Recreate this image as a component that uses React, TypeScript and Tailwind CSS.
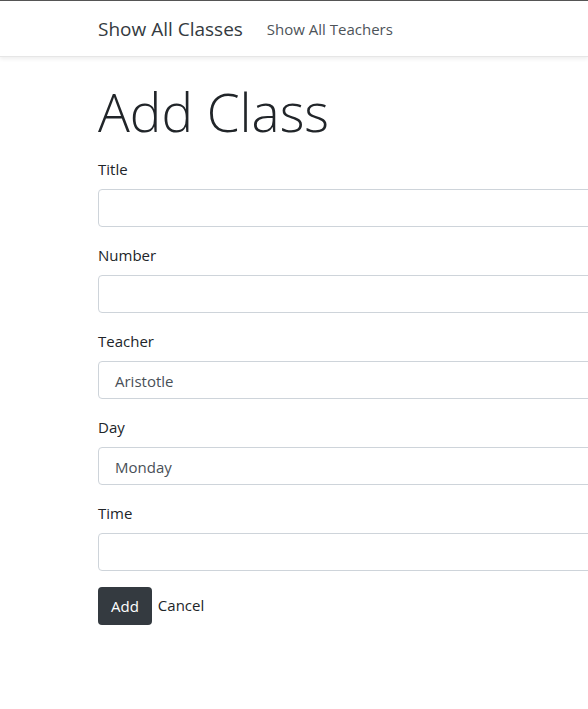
import React from 'react'

const fields = [
    { label: 'Title', value: '' },
    { label: 'Number', value: '' },
    { label: 'Teacher', value: 'Aristotle' },
    { label: 'Day', value: 'Monday' },
    { label: 'Time', value: '' },
]

export default function App() {
    return (
        <div className="min-h-[709px] w-[588px] overflow-hidden bg-white text-[#212529] font-['Open_Sans',sans-serif]">
            <nav className="border-t border-[#555] bg-white shadow-[0_2px_4px_rgba(0,0,0,0.07)] border-b border-b-[#e6e6e6]">
                <div className="flex h-[55px] items-center pl-[98px]">
                    <span className="text-[19px] leading-[30px] text-[#343a40]">Show All Classes</span>
                    <span className="ml-[24px] text-[15px] leading-[24px] text-[#4d5359]">Show All Teachers</span>
                </div>
            </nav>
            <main className="w-[700px] pl-[98px] pt-[21px]">
                <h1 className="mb-[12px] text-[53px] font-light leading-[67px] text-[#212529]">Add Class</h1>
                {fields.map((f) => (
                    <div key={f.label} className="mb-[16px]">
                        <label className="mb-[8px] block text-[15px] leading-[24px]">{f.label}</label>
                        <div className="flex h-[38px] w-full items-center rounded-[4px] border border-[#ced4da] bg-white px-[16px] pt-[2px] text-[15px] text-[#495057]">
                            {f.value}
                        </div>
                    </div>
                ))}
                <div className="flex items-center">
                    <button className="h-[38px] rounded-[4px] bg-[#343a40] px-[13px] text-[15px] text-white">Add</button>
                    <span className="ml-[6px] -mt-[2px] text-[15px] text-[#212529]">Cancel</span>
                </div>
            </main>
        </div>
    )
}
